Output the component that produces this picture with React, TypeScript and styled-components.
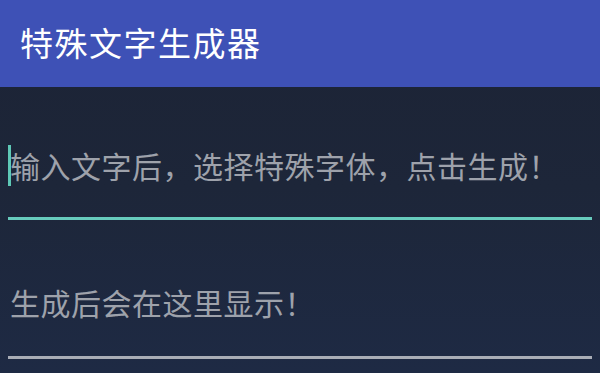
import styled, { createGlobalStyle } from "styled-components";

const GlobalStyle = createGlobalStyle`
    html, body {
        margin: 0;
        padding: 0;
        width: 600px;
        height: 373px;
        overflow: hidden;
        background: #1d2436;
        font-family: "Noto Sans CJK SC", "Noto Sans", sans-serif;
    }
    * {
        box-sizing: border-box;
    }
`;

const Screen = styled.div`
    width: 600px;
    height: 373px;
    display: flex;
    flex-direction: column;
    background: linear-gradient(180deg, #1c2335 0%, #1d2639 50%, #1e2a44 100%);
`;

const Toolbar = styled.div`
    height: 87px;
    flex-shrink: 0;
    background: #3e51b6;
    display: flex;
    align-items: center;
    padding: 0 0 4px 20px;
    color: #ffffff;
    font-size: 33px;
    letter-spacing: 1.5px;
`;

const Content = styled.div`
    display: flex;
    flex-direction: column;
    padding: 0 8px;
`;

const Field = styled.div<{ $active?: boolean; $pad: number; $height: number }>`
    height: ${(p) => p.$height}px;
    display: flex;
    align-items: flex-start;
    padding: ${(p) => p.$pad}px 0 0 2px;
    line-height: 41px;
    border-bottom: 3px solid ${(p) => (p.$active ? "#67cbbd" : "#a9adb6")};
    color: #9ea2ab;
    font-size: 30px;
    letter-spacing: 0.5px;
    white-space: nowrap;
`;

const Caret = styled.span`
    display: inline-block;
    width: 3px;
    height: 41px;
    margin-left: -2px;
    margin-right: -1px;
    background: #5ec8b6;
`;

export default function App() {
    return (
        <Screen>
            <GlobalStyle />
            <Toolbar>特殊文字生成器</Toolbar>
            <Content>
                <Field $active $pad={58} $height={133}>
                    <Caret />
                    输入文字后，选择特殊字体，点击生成！
                </Field>
                <Field $pad={62} $height={139}>生成后会在这里显示！</Field>
            </Content>
        </Screen>
    );
}
